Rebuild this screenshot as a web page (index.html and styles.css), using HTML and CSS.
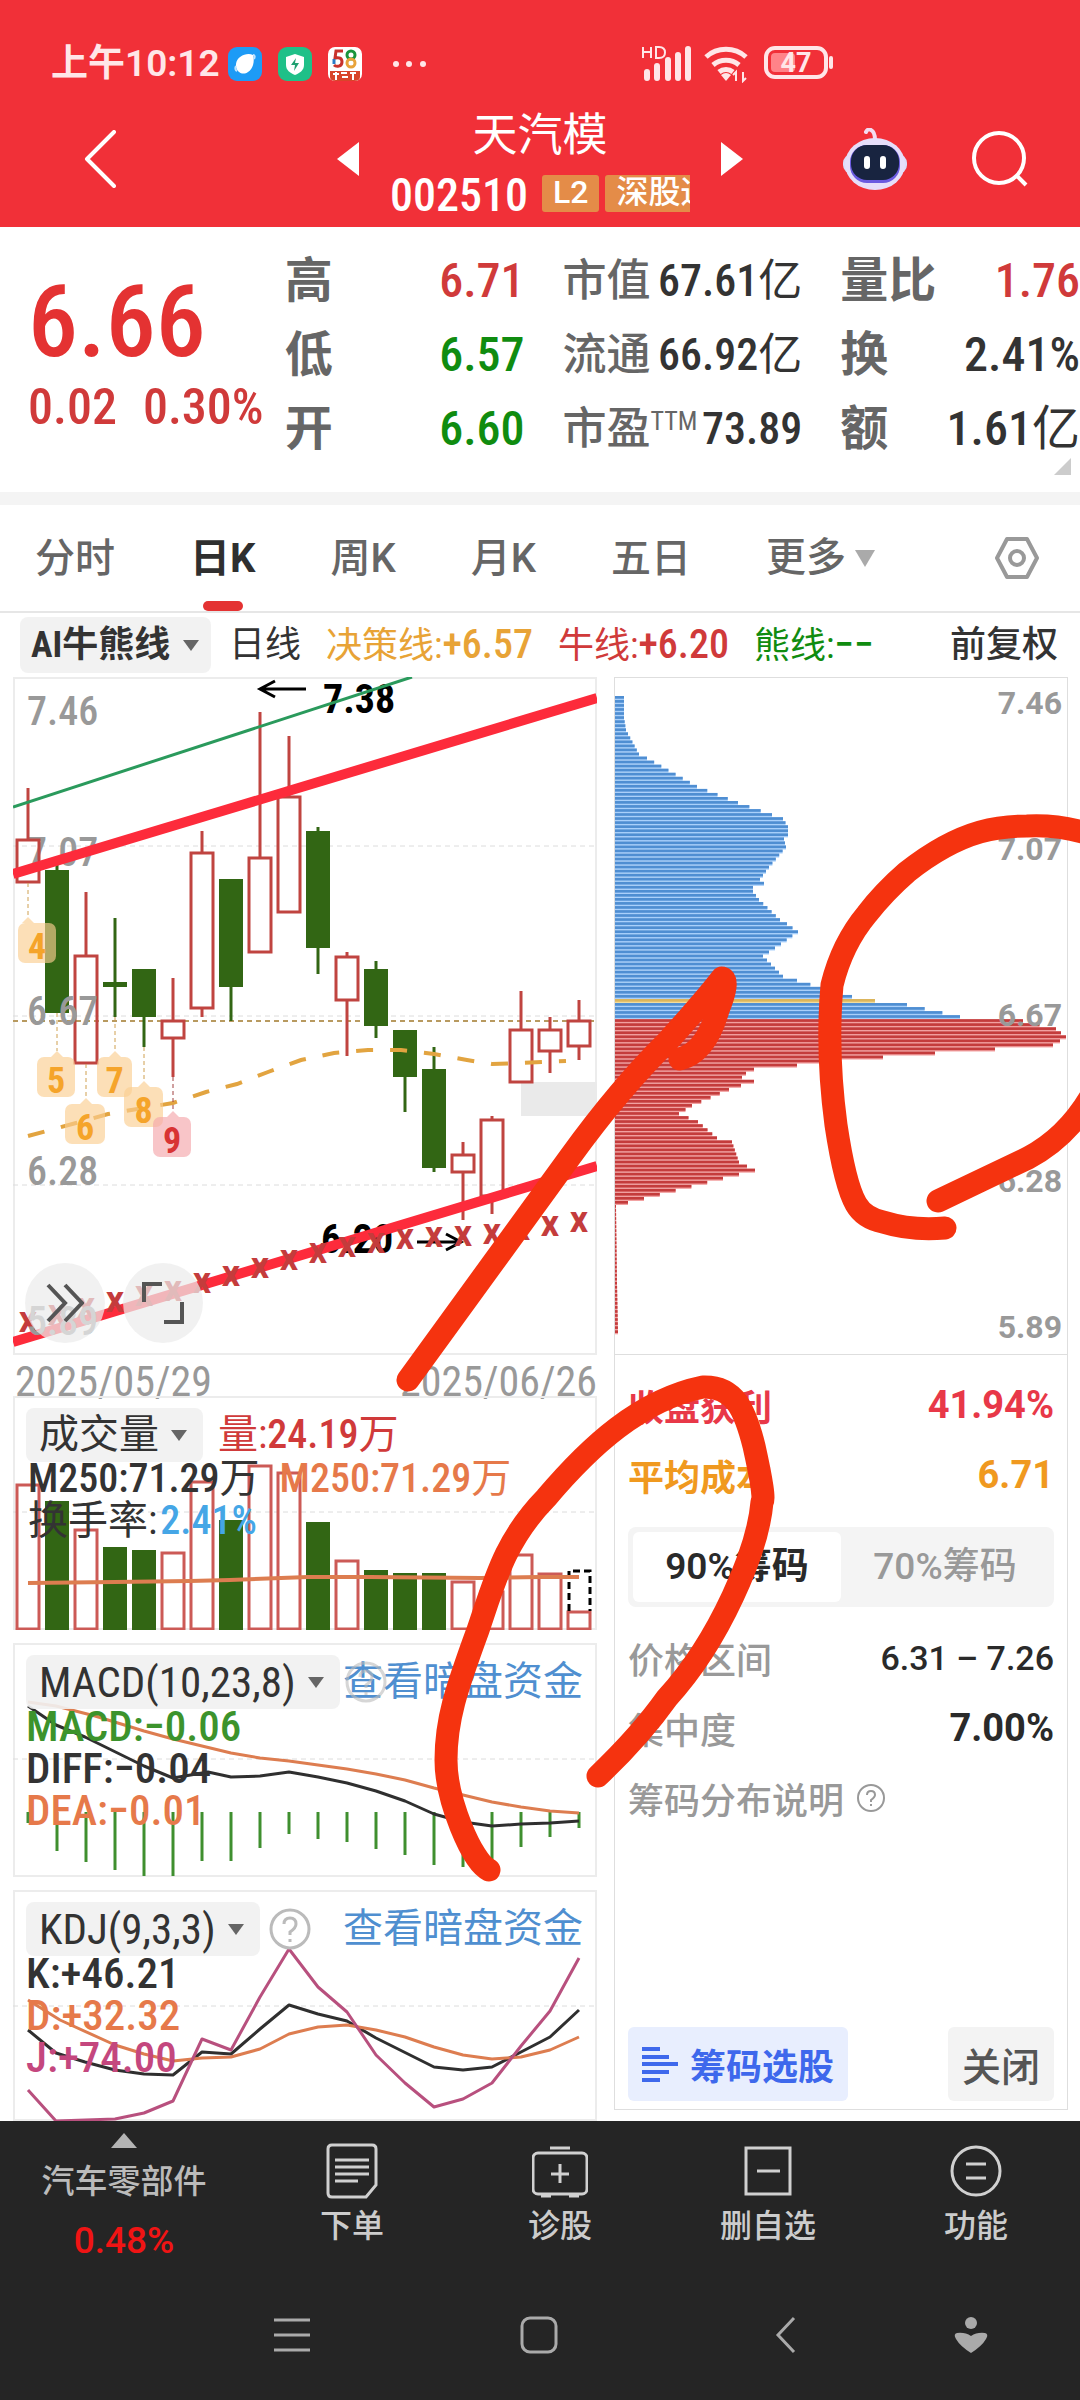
FILE: index.html
```html
<!DOCTYPE html>
<html lang="zh-CN">
<head>
<meta charset="utf-8">
<meta name="viewport" content="width=device-width">
<title>天汽模 002510</title>
<link rel="stylesheet" href="styles.css">
</head>
<body>
<div class="app">
  <header class="top">
    <div class="status">
      <span class="time">上午10:12</span>
      <svg class="app-ico" viewBox="0 0 34 34"><rect width="34" height="34" rx="9" fill="#1d9bf6"/><path d="M25 8C19 5 9 9 8 17c-1 8 7 12 12 8 5-3 7-11 5-17z" fill="#fff"/><path d="M9 24c-2-1-2-3-1-5M25 8c2 0 2 2 1 4" stroke="#bfe3ff" stroke-width="2" fill="none"/></svg>
      <svg class="app-ico" viewBox="0 0 34 34"><rect width="34" height="34" rx="9" fill="#1fc088"/><path d="M17 7l9 3v8c0 5-4 8-9 10-5-2-9-5-9-10v-8z" fill="#fff"/><path d="M18 11l-5 7h4l-1 6 5-8h-4z" fill="#1fa070"/></svg>
      <svg class="app-ico" viewBox="0 0 34 34"><rect width="34" height="34" rx="7" fill="#fff"/><path d="M15 4H8L7 11c4-1 7 0 7 4 0 5-6 5-8 3" stroke="#c8322c" stroke-width="3" fill="none"/><circle cx="23" cy="8" r="4" stroke="#18953c" stroke-width="3" fill="none"/><circle cx="23" cy="16" r="4" stroke="#e8a33a" stroke-width="3" fill="none"/><path d="M6 12v5" stroke="#2c7cc8" stroke-width="3"/><path d="M2 24h30v6q0 4-6 4H8q-6 0-6-4z" fill="#d8452a"/><path d="M5 27h6M8 25v8M13 26h6M14 30h6M22 26h6M25 27v6" stroke="#fff" stroke-width="2"/></svg>
      <svg class="dots" viewBox="0 0 34 34" fill="#ffe6e8"><circle cx="4" cy="17" r="3"/><circle cx="17" cy="17" r="3"/><circle cx="31" cy="17" r="3"/></svg>
      <svg class="sys" viewBox="0 0 192 38" fill="none" stroke="#ffe6e8">
        <path d="M1 2v11M9 2v11M1 7h8M14 2v11h3q6 0 6-5.500t-6-5.500z" stroke-width="2"/>
        <path d="M5 27v6M15 21v12M26 15v18M36 10v23M46 4v29" stroke-width="6" stroke-linecap="round"/>
        <path d="M64 12a30 30 0 0 1 40 0M71 20a20 20 0 0 1 26 0M77 27a11 11 0 0 1 14 0" stroke-width="5"/><path d="M79 30l5 6 5-6q-5-4-10 0z" fill="#ffe6e8" stroke="none"/><path d="M94 36v-9l-3 3M101 27v9l3-3" stroke-width="2"/>
        <rect x="124" y="3" width="60" height="29" rx="9" stroke-width="4"/><rect x="129" y="8" width="24" height="19" rx="4" fill="#ff8388" stroke="none"/><path d="M189 13v9" stroke-width="4" stroke-linecap="round"/>
        <text x="154" y="27" class="batt">47</text>
      </svg>
    </div>
    <div class="bar">
      <button class="icon-btn back" aria-label="返回"><svg width="32" height="58" viewBox="0 0 32 58"><path d="M30 2L3 29l27 27" fill="none" stroke="#fff" stroke-width="4" stroke-linecap="round" stroke-linejoin="round"/></svg></button>
      <div class="switcher">
        <button class="icon-btn" aria-label="上一只"><svg width="22" height="34" viewBox="0 0 22 34"><path d="M22 0v34L0 17z" fill="#fff"/></svg></button>
        <div class="title">
          <h1>天汽模</h1>
          <div class="code"><span>002510</span><b class="tag">L2</b><b class="tag">深股通</b></div>
        </div>
        <button class="icon-btn" aria-label="下一只"><svg width="22" height="34" viewBox="0 0 22 34"><path d="M0 0v34l22-17z" fill="#fff"/></svg></button>
      </div>
      <div class="actions">
        <button class="icon-btn" aria-label="智能助手"><svg width="66" height="62" viewBox="0 0 66 62"><path d="M24 4q2-4 5-2 4 2 4 10" fill="none" stroke="#f3dcf0" stroke-width="4" stroke-linecap="round"/><rect x="1" y="26" width="64" height="20" rx="9" fill="#dcdcfa"/><ellipse cx="33" cy="36" rx="30" ry="26" fill="#e6defa"/><rect x="8" y="17" width="50" height="38" rx="17" fill="#6a5ae0"/><rect x="9" y="17" width="48" height="35" rx="16" fill="#182440"/><path d="M25 31v7M41 31v7" stroke="#fff" stroke-width="6" stroke-linecap="round"/></svg></button>
        <button class="icon-btn" aria-label="搜索"><svg width="56" height="56" viewBox="0 0 56 56" fill="none" stroke="#fff" stroke-width="4"><circle cx="27" cy="27" r="25"/><path d="M44 44l10 10"/></svg></button>
      </div>
    </div>
  </header>

  <section class="quote">
    <div class="price"><strong>6.66</strong><div class="chg"><span>0.02</span><span>0.30%</span></div></div>
    <dl class="figs big"><div><dt>高</dt><dd class="up">6.71</dd></div><div><dt>低</dt><dd class="down">6.57</dd></div><div><dt>开</dt><dd class="down">6.60</dd></div></dl>
    <dl class="figs mid"><div><dt>市值</dt><dd>67.61<i>亿</i></dd></div><div><dt>流通</dt><dd>66.92<i>亿</i></dd></div><div><dt>市盈<sup>TTM</sup></dt><dd>73.89</dd></div></dl>
    <dl class="figs big"><div><dt>量比</dt><dd class="up">1.76</dd></div><div><dt>换</dt><dd>2.41%</dd></div><div><dt>额</dt><dd>1.61<i>亿</i></dd></div></dl>
    <svg class="corner" width="17" height="17" viewBox="0 0 17 17"><path d="M17 0v17H0z" fill="#ccc"/></svg>
  </section>

  <nav class="tabs">
    <button>分时</button><button class="on">日K</button><button>周K</button><button>月K</button><button>五日</button><button class="more">更多</button>
    <button class="icon-btn gear" aria-label="设置"><svg width="46" height="44" viewBox="0 0 46 44" fill="none" stroke="#999" stroke-width="4" stroke-linejoin="round"><path d="M13 3h20l10 19-10 19H13L3 22z"/><circle cx="23" cy="22" r="7"/></svg></button>
  </nav>

  <div class="legend">
    <label class="pick bold"><select aria-label="主图指标"><option>AI牛熊线</option></select></label>
    <span>日线</span><span class="amber">决策线:<b>+6.57</b></span><span class="up">牛线:<b>+6.20</b></span><span class="down">熊线:<b>−−</b></span>
    <button class="adjust">前复权</button>
  </div>

  <main class="board">
    <div class="left">
      <figure class="panel">
        <svg class="plot" viewBox="13 677 584 678">
          <g class="grid"><path d="M13 846H597M13 1016H597M13 1185H597"/></g>
          <path class="now" d="M13 1021H597"/>
          <g class="axis"><text x="27" y="725">7.46</text><text x="27" y="866">7.07</text></g>
          <rect x="521" y="1082" width="76" height="34" fill="#eaeaea"/>
          <g class="mark"><text x="323" y="713">7.38</text><text x="321" y="1253">6.20</text></g>
          <g class="arrow"><path d="M306 689H260M275 681l-15 8 15 8M417 1242h43M446 1234l15 8-15 8"/></g>
          <g id="candles"></g>
          <g class="axis"><text x="27" y="1025">6.67</text><text x="27" y="1185">6.28</text></g>
          <path d="M13 807L412 677" stroke="#2a9a5c" stroke-width="3"/>
          <path class="ma" d="M28 1136L76 1123 108 1114 173 1103 206 1092 237 1084 268 1072 301 1060 334 1053 368 1050H401L434 1054 467 1060 492 1064 518 1063 566 1061"/>
          <g id="flags"></g>
          <path d="M13 874L597 698" stroke="#fd2b3b" stroke-width="10"/>
          <path d="M13 1342L597 1166" stroke="#fd2b3b" stroke-width="10"/>
          <g id="crosses" class="cross"></g>
          <g class="axis"><text x="27" y="1335">5.89</text></g>
        </svg>
        <div class="tools">
          <button aria-label="展开"><svg width="38" height="40" viewBox="0 0 38 40"><path d="M2 2l17 18L2 38M19 2l17 18-17 18"/></svg></button>
          <button aria-label="全屏"><svg width="42" height="42" viewBox="0 0 42 42"><path d="M2 20V2h18M22 40h18V20"/></svg></button>
        </div>
      </figure>
      <div class="dates"><time>2025/05/29</time><time>2025/06/26</time></div>

      <figure class="panel">
        <svg class="plot" viewBox="13 1396 584 234">
          <path class="grid" d="M13 1512H597"/>
          <g id="volume"></g>
          <path d="M28 1583L115 1582 190 1581 230 1580 308 1577H370L480 1578 540 1577H579" fill="none" stroke="#dd7d50" stroke-width="4"/>
        </svg>
        <div class="read">
          <div class="head"><label class="pick"><select aria-label="成交量指标"><option>成交量</option></select></label><span class="up">量:<b>24.19</b>万</span></div>
          <div class="line"><span><b>M250:71.29</b>万</span><span class="org"><b>M250:71.29</b>万</span></div>
          <div class="line tight"><span>换手率:</span><b class="sky">2.41%</b></div>
        </div>
      </figure>

      <figure class="panel">
        <svg class="plot" viewBox="13 1643 584 234">
          <path class="grid" d="M13 1759H597"/>
          <g id="macd" stroke="#3f8f2f" stroke-width="3"></g>
          <path class="k" d="M28 1706L56 1725 85 1737 144 1766 173 1778 208 1772 231 1777 260 1776 289 1772 318 1777 347 1783 376 1791 405 1801 434 1814 463 1822 492 1826 521 1824 550 1823 579 1821"/>
          <path class="d" d="M28 1702L56 1706 95 1716 144 1731 173 1739 231 1753 260 1758 289 1761 347 1769 376 1774 405 1780 434 1788 463 1795 492 1802 521 1807 550 1811 579 1813"/>
        </svg>
        <div class="read wide">
          <div class="head"><label class="pick"><select aria-label="MACD 参数"><option>MACD(10,23,8)</option></select></label><svg class="help under" width="42" height="42" viewBox="0 0 42 42"><circle cx="21" cy="21" r="19"/><path d="M15 16q0-6 6-6t6 6q0 4-6 8v3M21 31v3"/></svg><a href="#">查看暗盘资金</a></div>
          <div class="line grn">MACD:−0.06</div>
          <div class="line">DIFF:−0.04</div>
          <div class="line org">DEA:−0.01</div>
        </div>
      </figure>

      <figure class="panel">
        <svg class="plot" viewBox="13 1890 584 231">
          <path class="grid" d="M13 2006H597"/>
          <path class="k" d="M28 2030L56 2053 85 2062 115 2070 144 2074 173 2075 202 2052 231 2054 260 2029 289 2005 318 2014 347 2021 376 2038 434 2067 463 2070 492 2067 521 2052 550 2037 579 2010"/>
          <path class="d" d="M28 2000L60 2020 115 2045 144 2054 173 2061 202 2058 231 2057 260 2049 289 2034 318 2027 347 2025 376 2030 405 2037 434 2047 463 2055 492 2059 521 2057 550 2050 579 2037"/>
          <path class="j" d="M28 2090L56 2121 115 2119 144 2113 173 2101 202 2039 231 2050 260 1997 289 1949 318 1987 347 2012 376 2055 405 2083 434 2107 463 2099 492 2083 521 2046 550 2011 579 1958"/>
        </svg>
        <div class="read wide">
          <div class="head"><label class="pick"><select aria-label="KDJ 参数"><option>KDJ(9,3,3)</option></select></label><svg class="help" width="42" height="42" viewBox="0 0 42 42"><circle cx="21" cy="21" r="19"/><path d="M15 16q0-6 6-6t6 6q0 4-6 8v3M21 31v3"/></svg><a href="#">查看暗盘资金</a></div>
          <div class="line">K:+46.21</div>
          <div class="line org">D:+32.32</div>
          <div class="line pnk">J:+74.00</div>
        </div>
      </figure>
    </div>

    <aside class="chips">
      <svg class="plot" viewBox="615 678 452 676">
        <g id="dist"></g>
        <g class="axis2"><text x="1062" y="714">7.46</text><text x="1062" y="860">7.07</text><text x="1062" y="1026">6.67</text><text x="1062" y="1192">6.28</text><text x="1062" y="1338">5.89</text></g>
      </svg>
      <div class="stats">
        <p class="row rose"><span>收盘获利</span><b>41.94%</b></p>
        <p class="row gold"><span>平均成本</span><b>6.71</b></p>
        <div class="seg"><button class="on">90%筹码</button><button>70%筹码</button></div>
        <p class="row grey"><span>价格区间</span><b class="range">6.31 – 7.26</b></p>
        <p class="row grey"><span>集中度</span><b>7.00%</b></p>
        <p class="row grey info"><span>筹码分布说明</span><svg width="30" height="30" viewBox="0 0 30 30" fill="none" stroke="#999" stroke-width="2"><circle cx="15" cy="15" r="13"/><path d="M11 12q0-4 4-4t4 4q0 2-4 5v2M15 21v2"/></svg></p>
        <div class="foot">
          <button class="select-stock"><svg width="36" height="36" viewBox="0 0 36 36" stroke="#3e68ec" stroke-width="4"><path d="M0 3h18M0 11h27M0 18h36M0 26h27M0 34h18"/></svg>筹码选股</button>
          <button class="close">关闭</button>
        </div>
      </div>
    </aside>
  </main>

  <footer class="dock">
    <nav class="dock-tabs">
      <a href="#" class="sector"><svg width="26" height="15" viewBox="0 0 26 15"><path d="M13 0l13 15H0z" fill="#b4b4b4"/></svg><span>汽车零部件</span><em>0.48%</em></a>
      <a href="#"><svg viewBox="0 0 56 56"><path d="M8 2h40q4 0 4 4v36L42 54H8q-4 0-4-4V6q0-4 4-4zM11 17h34M11 24h34M11 31h34M11 38h23"/></svg>下单</a>
      <a href="#"><svg viewBox="0 0 56 56"><rect x="1" y="10" width="54" height="41" rx="5"/><path d="M18 5h20M28 21v19M19 31h18M9 53h10M37 53h10"/></svg>诊股</a>
      <a href="#"><svg viewBox="0 0 56 56"><path d="M6 5h44v46H6zM17 28h23"/></svg>删自选</a>
      <a href="#"><svg viewBox="0 0 56 56"><circle cx="28" cy="28" r="24"/><path d="M18 21h20M18 35h20"/></svg>功能</a>
    </nav>
    <div class="sysnav">
      <svg viewBox="0 0 38 38"><path d="M1 4h36M1 19h36M1 34h36"/></svg>
      <svg viewBox="0 0 38 38"><rect x="2" y="2" width="34" height="34" rx="8"/></svg>
      <svg viewBox="0 0 38 38"><path d="M27 2L11 19l16 17"/></svg>
      <svg viewBox="0 0 38 38"><circle cx="19" cy="7" r="6" fill="#aaa" stroke="none"/><path d="M5 17q-4 1-1 6 4 7 15 14 11-7 15-14 3-5-1-6-8-1-14 3-6-4-14-3z" fill="#aaa" stroke="none"/></svg>
    </div>
  </footer>

  <svg class="ink" viewBox="0 0 1080 2400">
    <path d="M408 1380L570 1157Q620 1088 667 1042 705 1000 722 978 730 980 718 1010 706 1052 680 1059"/>
    <path d="M1100 838Q1065 824 1027 826 1002 826 980 832 945 842 907 872 884 892 867 914 842 944 832 985C828 1030 830 1080 836 1125 842 1165 848 1190 856 1204Q864 1218 883 1222 912 1231 945 1228"/>
    <path d="M938 1201L1028 1158Q1066 1138 1090 1098"/>
    <path d="M489 1870C472 1862 446 1800 446 1760 446 1720 456 1690 478 1630 495 1580 505 1540 546 1498 590 1446 640 1400 703 1387 735 1386 745 1410 754 1446Q766 1500 762 1502C758 1550 720 1640 667 1698Q640 1736 598 1776"/>
  </svg>
</div>
<script src="chart.js"></script>
</body>
</html>
```
FILE: styles.css
```css
* { box-sizing: border-box; }
body, h1, p, dl, dd, figure { margin: 0; }
body { background: #fff; color: #333; font-family: "Roboto Condensed", "Noto Sans CJK SC", sans-serif; font-size: 40px; }
button, select { font: inherit; color: inherit; background: none; border: 0; padding: 0; appearance: none; white-space: nowrap; }
a { text-decoration: none; color: inherit; }
svg { display: block; flex: none; }
.app { position: relative; overflow: hidden; }
.icon-btn { line-height: 0; }

.up { color: #d03a3a; }
.down { color: #108c10; }
.amber { color: #e8a336; }
.org { color: #e6794a; }
.sky { color: #45a6e6; }
.grn { color: #3c932c; }
.pnk { color: #c4477e; }

/* header */
.top { background: #f13038; color: #fff; padding: 22px 0 15px; }
.status { display: flex; align-items: center; height: 84px; padding-left: 51px; font: 600 37px Roboto, "Noto Sans CJK SC", sans-serif; color: #ffe6e8; }
.time { width: 177px; line-height: 40px; }
.app-ico { width: 34px; margin-right: 16px; }
.dots { width: 34px; margin-left: 14px; }
.sys { width: 192px; margin-left: 216px; }
.batt { font: 700 27px Roboto, sans-serif; text-anchor: middle; fill: #ffe6e8; stroke: none; }
.bar { display: flex; align-items: center; padding: 0 52px 0 84px; }
.back { flex: 1; text-align: left; }
.switcher { display: flex; align-items: center; gap: 31px; }
.title { width: 300px; }
.title h1 { font: 400 45px/52px "Noto Sans CJK SC", sans-serif; text-align: center; }
.code { display: flex; gap: 6px; margin-top: 17px; overflow: hidden; height: 37px; font-size: 46px; line-height: 40px; font-weight: 500; }
.code span { margin-right: 8px; }
.tag { flex: none; background: #e48c48; border-radius: 3px; padding: 0 11px; font: 500 32px/35px Roboto, "Noto Sans CJK SC", sans-serif; }
.actions { display: flex; align-items: center; gap: 64px; margin-left: 99px; }

/* quote */
.quote { position: relative; display: flex; padding: 17px 0 26px 28px; border-bottom: 13px solid #f4f4f4; }
.price { flex: 257; padding-top: 29px; color: #e43232; }
.price strong { display: block; font-size: 100px; line-height: 98px; font-weight: 500; }
.chg { display: flex; gap: 26px; font-size: 50px; line-height: 72px; font-weight: 500; color: #d03a3a; }
.figs { flex: 240; margin-right: 38px; }
.figs:last-of-type { margin-right: 0; }
.figs div { display: flex; align-items: center; justify-content: space-between; height: 74px; line-height: 74px; white-space: nowrap; }
.figs dt { color: #666; font-weight: 500; font-size: 44px; }
.figs dd { font-size: 44px; font-weight: 500; }
.figs i { font-style: normal; font-weight: 400; }
.big dt { font-weight: 700; font-size: 48px; }
.big dd { font-size: 48px; }
.figs sup { font-size: 26px; line-height: 1; font-weight: 400; vertical-align: 14px; }
.corner { position: absolute; right: 9px; bottom: 17px; }

/* period tabs */
.tabs { display: flex; align-items: center; gap: 75px; height: 108px; padding: 0 40px 0 35px; border-bottom: 2px solid #e6e6e6; font: 500 40px Roboto, "Noto Sans CJK SC", sans-serif; color: #666; }
.tabs button { position: relative; height: 106px; line-height: 108px; }
.tabs .on { color: #2f2f2f; font-weight: 700; }
.tabs .on::after { content: ""; position: absolute; left: 50%; bottom: 0; width: 40px; height: 10px; margin-left: -20px; border-radius: 5px; background: #e43232; }
.tabs .more { display: flex; align-items: center; gap: 9px; }
.more::after { content: ""; border: 10px solid transparent; border-top: 17px solid #aaa; border-bottom: 0; }
.tabs .gear { margin-left: auto; height: 44px; line-height: 0; }

/* indicator legend */
.pick { display: inline-flex; align-items: center; gap: 12px; height: 54px; padding: 0 16px 0 13px; border-radius: 8px; background: #f1f1f1e8; }
.pick::after { content: ""; border: 8px solid transparent; border-top: 11px solid #666; border-bottom: 0; }
.pick.bold { height: 56px; padding: 0 12px 0 11px; font-weight: 700; }
.legend { display: flex; align-items: center; gap: 25px; height: 64px; padding: 0 22px 0 20px; font-size: 36px; line-height: 52px; white-space: nowrap; }
.legend .pick { margin-right: -7px; }
.legend b { font-size: 40px; font-weight: 500; }
.adjust { margin-left: auto; font-weight: 500; }

/* board */
.board { display: grid; grid-template-columns: 584fr 454fr; gap: 17px; padding: 0 12px 0 13px; }
.panel { position: relative; box-shadow: inset 0 0 0 2px #ececec; margin-bottom: 13px; }
.panel:last-child { margin-bottom: 0; }
.plot { width: 100%; height: auto; }
.grid, .now { fill: none; stroke: #dcdcdc; stroke-width: 1; stroke-dasharray: 5 4; }
.now { stroke: #b89a60; stroke-width: 2; }
.axis { font-size: 40px; font-weight: 500; fill: #999; }
.mark { font-size: 40px; font-weight: 700; fill: #000; }
.arrow { fill: none; stroke: #000; stroke-width: 3; }
.ma { fill: none; stroke: #e2a440; stroke-width: 4; stroke-dasharray: 17 17; }
.cross { font: 700 36px Roboto, sans-serif; text-anchor: middle; fill: #c43c3c; }
.flag { font: 700 36px "Roboto Condensed", sans-serif; text-anchor: middle; }
.k, .d, .j { fill: none; stroke-width: 3; stroke-linejoin: round; }
.k { stroke: #2f2f2f; }
.d { stroke: #dd7d50; }
.j { stroke: #b8507e; }
.tools { position: absolute; left: 12px; bottom: 12px; display: flex; gap: 18px; }
.tools button { display: grid; place-items: center; width: 80px; height: 80px; border-radius: 50%; background: #ebebebb8; }
.tools svg { fill: none; stroke: #555; stroke-width: 4; }
.dates { display: flex; justify-content: space-between; height: 41px; margin-top: -13px; padding: 4px 0 0 2px; font-size: 42px; line-height: 46px; color: #999; }

.read { position: absolute; inset: 12px 14px auto 13px; font-size: 40px; line-height: 42px; white-space: nowrap; }
.read b { font-weight: 500; }
.head { display: flex; align-items: center; height: 54px; margin-bottom: -4px; gap: 15px; line-height: 54px; }
.wide .head { gap: 9px; }
.line { display: flex; gap: 20px; margin-left: 2px; height: 42px; }
.line.tight { gap: 3px; }
.read.wide { font-size: 43px; }
.wide .line { font-weight: 500; margin-left: 0; }
.head a { margin-left: auto; font-size: 40px; color: #4f8fd0; }
.help { fill: none; stroke: #bbb; stroke-width: 3; }
.help.under { opacity: .6; margin: 0 -60px 0 -4px; }

/* cost distribution */
.chips { display: flex; flex-direction: column; margin-bottom: 11px; border: 1px solid #dedede; font-family: Roboto, "Noto Sans CJK SC", sans-serif; }
.axis2 { font-size: 32px; font-weight: 700; text-anchor: end; fill: #999; }
.stats { flex: 1; display: flex; flex-direction: column; padding: 15px 13px 8px; border-top: 1px solid #dedede; font-size: 36px; }
.row { display: flex; align-items: center; justify-content: space-between; height: 70px; font-weight: 500; }
.row b { font-size: 38px; font-weight: 700; }
.rose { color: #e83848; }
.gold { color: #f0991f; }
.rose span, .gold span { font-weight: 700; }
.grey { color: #999; }
.grey b { color: #2a2a2a; }
.row .range { font-size: 34px; font-weight: 500; }
.info { justify-content: flex-start; gap: 12px; }
.seg { display: grid; grid-template-columns: 1fr 1fr; height: 80px; margin: 17px 0 16px; padding: 5px; border-radius: 8px; background: #f4f4f4; color: #999; }
.seg button { font-weight: 500; font-size: 37px; line-height: 68px; }
.seg .on { background: #fff; color: #2a2a2a; border-radius: 6px; font-weight: 600; }
.foot { display: flex; justify-content: space-between; margin-top: auto; }
.foot button { display: flex; align-items: center; gap: 12px; height: 74px; padding: 0 14px; border-radius: 6px; font-weight: 700; }
.select-stock { background: #e8eefe; color: #3e68ec; }
.foot .close { background: #f3f3f3; color: #555; font-size: 39px; font-weight: 500; }

/* bottom bars */
.dock { background: #252525; color: #ccc; font: 500 32px Roboto, "Noto Sans CJK SC", sans-serif; }
.dock-tabs { display: grid; grid-template-columns: 248fr 208fr 208fr 208fr 208fr; height: 144px; }
.dock-tabs a { display: flex; flex-direction: column; align-items: center; padding-top: 22px; line-height: 54px; }
.dock-tabs a > svg { width: 56px; fill: none; stroke: #d0d0d0; stroke-width: 3; }
.dock-tabs .sector { padding-top: 12px; color: #bbb; line-height: 68px; }
.dock-tabs .sector > svg { width: 26px; stroke: none; }
.sector span { font-size: 33px; }
.sector em { font-style: normal; font-size: 37px; line-height: 50px; color: #f01414; }
.sysnav { display: grid; grid-template-columns: 247fr 247fr 247fr 123fr; justify-items: center; padding: 51px 48px 46px 168px; }
.sysnav svg { width: 38px; fill: none; stroke: #aaa; stroke-width: 3; }

.ink { position: absolute; left: 0; top: 0; width: 100%; pointer-events: none; fill: none; stroke: #f5330f; stroke-width: 23; stroke-linecap: round; stroke-linejoin: round; }
```
FILE: chart.js
```js
const STEP = 29, X0 = 28, RED = '#c04440', GREEN = '#326614';
const cx = i => X0 + i * STEP;
const put = (id, html) => { document.getElementById(id).innerHTML = html; };

// [high, body top, body bottom, low, rising]
const candles = [
  [788,840,882,882,1],[865,870,1013,1013,0],[892,956,1063,1063,1],[918,982,987,1017,0],
  [969,969,1017,1047,0],[978,1021,1038,1077,1],[831,853,1008,1017,1],[879,879,987,1021,0],
  [712,858,952,952,1],[736,797,912,912,1],[827,831,948,974,0],[952,957,1000,1056,1],
  [961,969,1026,1038,0],[1030,1030,1077,1112,0],[1047,1069,1168,1172,0],[1142,1155,1172,1220,1],
  [1116,1120,1196,1214,1],[991,1030,1082,1082,1],[1017,1030,1051,1073,1],[1000,1021,1046,1060,1]
];
put('candles', candles.map(([h, t, b, l, up], i) => {
  const x = cx(i);
  return up
    ? `<path d="M${x} ${h}V${t}M${x} ${b}V${l}M${x - 11} ${t}h22V${b}h-22z" fill="none" stroke="${RED}" stroke-width="3"/>`
    : `<path d="M${x} ${h}V${l}" stroke="${GREEN}" stroke-width="3"/><rect x="${x - 12}" y="${t}" width="24" height="${b - t}" fill="${GREEN}"/>`;
}).join(''));

// nine-turn markers: number, line start, tip, left, width
const flags = [[0,4,883,917,18,38],[1,5,1013,1051,37,38],[2,6,1064,1098,65,40],[3,7,1017,1051,97,35],[4,8,1047,1081,124,39],[5,9,1077,1111,153,38]];
put('flags', flags.map(([i, n, from, tip, left, w]) => {
  const x = cx(i), last = n === 9, c = last ? '#d83434' : '#f5a42a', bg = last ? '#f4a6aa' : '#fbce90';
  return `<path d="M${x} ${from}V${tip}" stroke="${last ? '#a04040' : '#cfa050'}" stroke-dasharray="4 3"/>` +
    `<g fill="${bg}" fill-opacity=".65"><path d="M${x - 6} ${tip + 6}l6-6 6 6z"/><rect x="${left}" y="${tip + 6}" width="${w}" height="40" rx="7"/></g>` +
    `<text class="flag" x="${left + w / 2}" y="${tip + 42}" fill="${c}">${n}</text>`;
}).join(''));

const cross = [1323,1316,1309,1303,1297,1292,1284,1277,1269,1261,1254,1248,1244,1240,1238,1237,1235,1231,1227,1223];
put('crosses', cross.map((y, i) => `<text x="${cx(i)}" y="${y + 9}">x</text>`).join(''));

const vol = [1485,1501,1530,1547,1550,1553,1482,1520,1466,1473,1522,1561,1570,1573,1573,1582,1592,1555,1574,1612];
put('volume', vol.map((y, i) => candles[i][4]
  ? `<rect x="${cx(i) - 11}" y="${y}" width="22" height="${1629 - y}" fill="none" stroke="#cc5a56" stroke-width="3"/>`
  : `<rect x="${cx(i) - 12}" y="${y}" width="24" height="${1630 - y}" fill="${GREEN}"/>`).join('') +
  '<path d="M569 1611V1571h21v40" fill="none" stroke="#000" stroke-width="3" stroke-dasharray="7 4"/>');

const macd = [1823,1851,1862,1870,1876,1876,1861,1861,1848,1834,1839,1842,1849,1855,1865,1867,1860,1847,1837,1828];
put('macd', macd.map((y, i) => `<path d="M${cx(i)} 1812V${y}"/>`).join(''));

// price profile as [row, width] knots, linear in between
const knots = [[0,9],[5,9],[8,11],[9,13],[14,24],[15,32],[22,82],[26,123],[29,157],[30,168],[32,173],[34,173],[35,169],[37,171],[42,154],[45,145],[46,149],[47,138],[48,138],[50,144],[55,165],[56,172],[58,183],[61,166],[64,148],[65,152],[69,168],[70,182],[73,222],[74,237],[75,260],[76,292],[79,345],[80,408],[82,441],[84,451],[85,445],[86,438],[87,380],[88,320],[89,268],[90,225],[91,182],[92,139],[93,131],[94,127],[95,139],[96,126],[97,114],[101,77],[103,64],[105,83],[109,102],[110,117],[115,124],[116,132],[117,140],[118,124],[119,108],[124,29],[125,13],[126,1],[145,2],[157,3]];
let bars = '';
for (let r = 0, k = 0; r < 158; r++) {
  while (k < knots.length - 2 && knots[k + 1][0] <= r) k++;
  const [a, wa] = knots[k], [b, wb] = knots[k + 1];
  const w = wa + (wb - wa) * (r - a) / (b - a);
  const y = 696 + r * 4.04;
  const c = r === 75 ? ['#dcb55c', '#f3dc9c'] : r < 80 ? ['#4f8ed2', '#a9d0fb'] : ['#c43c3c', '#f2a0a0'];
  bars += `<rect x="615" y="${y}" width="${w}" height="4" fill="${c[1]}"/><rect x="615" y="${y}" width="${w}" height="2.700" fill="${c[0]}"/>`;
}
put('dist', bars);
```
